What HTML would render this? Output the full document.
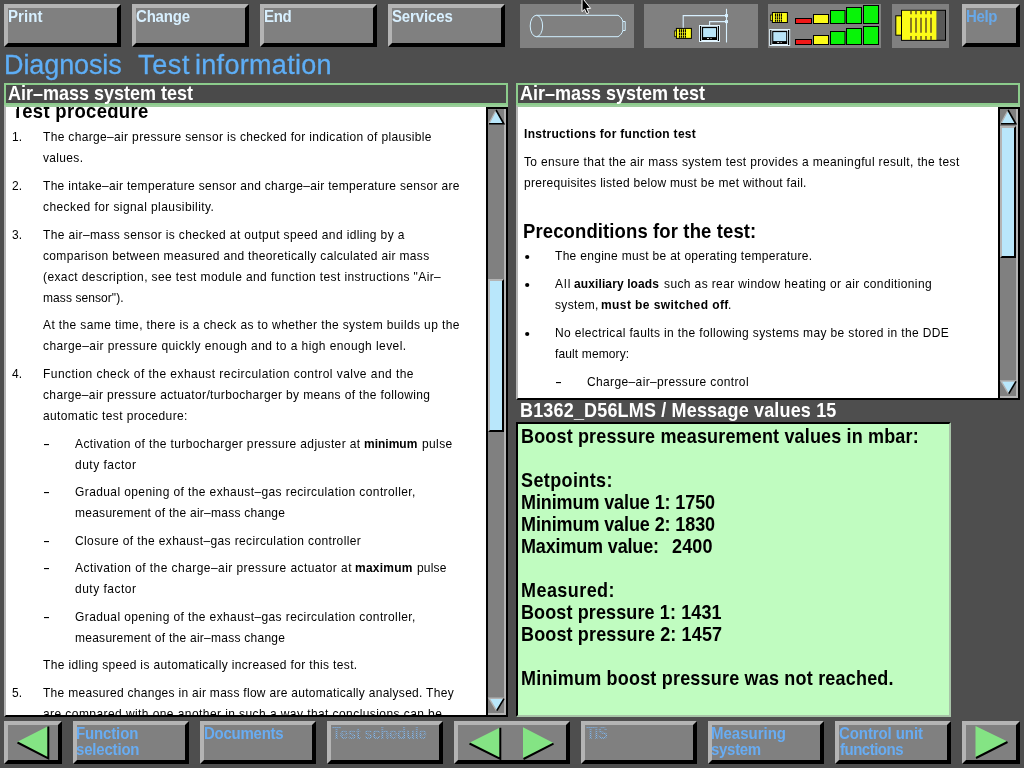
<!DOCTYPE html>
<html><head><meta charset="utf-8"><title>Diagnosis - Test information</title>
<style>
html,body{margin:0;padding:0}
body{width:1024px;height:768px;background:#4e4e4e;position:relative;overflow:hidden;font-family:"Liberation Sans",sans-serif}
.t{position:absolute;white-space:pre;line-height:20px;height:20px;will-change:transform}
.btn{position:absolute;box-sizing:border-box;background:#808080;border:4px solid;border-color:#b4b4b4 #000 #000 #b4b4b4}
.ibox{position:absolute;background:#808080;top:4px;height:44px}
.hdr{position:absolute;box-sizing:border-box;top:83px;height:22px;border:2px solid #8ccc8c;background:#4a4a4a}
.panel{position:absolute;background:#fff;overflow:hidden}
.sb{position:absolute;box-sizing:border-box;background:#808080;border:2px solid #000;width:22px}
.sb i{position:absolute;right:0;top:0;bottom:0;width:2px;background:#b4b4b4}
.sb b{position:absolute;left:0;right:0;bottom:0;height:2px;background:#b4b4b4}
.th{position:absolute;box-sizing:border-box;left:0;width:16px;background:#b9e7fb;border:2px solid;border-color:#b4b4b4 #000 #000 #b4b4b4}
.d{position:absolute;width:5px;height:1px;background:#000;box-shadow:0 0.5px 0 rgba(0,0,0,.25)}
.ttl{-webkit-text-stroke:0.3px #5eaef6}
.dis{color:transparent !important;background:repeating-conic-gradient(#84bcf6 0 25%,#7c8288 0 50%) 0 0/2px 2px;-webkit-background-clip:text;background-clip:text}
svg{position:absolute;left:0;top:0}
</style></head><body>

<!-- top buttons -->
<div class="btn" style="left:4px;top:4px;width:117px;height:43px"></div>
<div class="btn" style="left:132px;top:4px;width:117px;height:43px"></div>
<div class="btn" style="left:260px;top:4px;width:117px;height:43px"></div>
<div class="btn" style="left:388px;top:4px;width:117px;height:43px"></div>
<div class="btn" style="left:962px;top:4px;width:58px;height:43px"></div>
<div class="ibox" style="left:520px;width:114px"></div>
<div class="ibox" style="left:644px;width:114px"></div>
<div class="ibox" style="left:768px;width:113px"></div>
<div class="ibox" style="left:892px;width:57px"></div>

<!-- headers -->
<div class="hdr" style="left:4px;width:504px"></div>
<div class="hdr" style="left:516px;width:504px"></div>

<!-- left panel -->
<div style="position:absolute;left:4px;top:105px;width:504px;height:612px;background:#fff;border-top:2px solid #9ccc9c;border-left:2px solid #b4b4b4;border-bottom:2px solid #000;box-sizing:border-box"></div>
<div class="panel" style="left:6px;top:107px;width:480px;height:608px">
<span class="t" style="left:6.00px;top:-5.00px;font-size:18.5px;letter-spacing:0.308px;font-weight:700;transform:scaleY(1.09);transform-origin:0 16.41px;">Test procedure</span>
<span class="t" style="left:6.00px;top:20.00px;font-size:12px;transform:scaleY(1.1);transform-origin:0 14.16px;">1.</span>
<span class="t" style="left:6.00px;top:69.00px;font-size:12px;transform:scaleY(1.1);transform-origin:0 14.16px;">2.</span>
<span class="t" style="left:6.00px;top:118.00px;font-size:12px;transform:scaleY(1.1);transform-origin:0 14.16px;">3.</span>
<span class="t" style="left:6.00px;top:257.00px;font-size:12px;transform:scaleY(1.1);transform-origin:0 14.16px;">4.</span>
<span class="t" style="left:6.00px;top:576.00px;font-size:12px;transform:scaleY(1.1);transform-origin:0 14.16px;">5.</span>
<span class="t" style="left:37.00px;top:20.00px;font-size:12px;letter-spacing:0.338px;transform:scaleY(1.1);transform-origin:0 14.16px;">The charge–air pressure sensor is checked for indication of plausible</span>
<span class="t" style="left:37.00px;top:41.00px;font-size:12px;letter-spacing:0.333px;transform:scaleY(1.1);transform-origin:0 14.16px;">values.</span>
<span class="t" style="left:37.00px;top:69.00px;font-size:12px;letter-spacing:0.307px;transform:scaleY(1.1);transform-origin:0 14.16px;">The intake–air temperature sensor and charge–air temperature sensor are</span>
<span class="t" style="left:37.00px;top:90.00px;font-size:12px;letter-spacing:0.419px;transform:scaleY(1.1);transform-origin:0 14.16px;">checked for signal plausibility.</span>
<span class="t" style="left:37.00px;top:118.00px;font-size:12px;letter-spacing:0.369px;transform:scaleY(1.1);transform-origin:0 14.16px;">The air–mass sensor is checked at output speed and idling by a</span>
<span class="t" style="left:37.00px;top:139.00px;font-size:12px;letter-spacing:0.344px;transform:scaleY(1.1);transform-origin:0 14.16px;">comparison between measured and theoretically calculated air mass</span>
<span class="t" style="left:37.00px;top:160.00px;font-size:12px;letter-spacing:0.394px;transform:scaleY(1.1);transform-origin:0 14.16px;">(exact description, see test module and function test instructions &quot;Air–</span>
<span class="t" style="left:37.00px;top:181.00px;font-size:12px;letter-spacing:0.077px;transform:scaleY(1.1);transform-origin:0 14.16px;">mass sensor&quot;).</span>
<span class="t" style="left:37.00px;top:208.00px;font-size:12px;letter-spacing:0.382px;transform:scaleY(1.1);transform-origin:0 14.16px;">At the same time, there is a check as to whether the system builds up the</span>
<span class="t" style="left:37.00px;top:229.00px;font-size:12px;letter-spacing:0.418px;transform:scaleY(1.1);transform-origin:0 14.16px;">charge–air pressure quickly enough and to a high enough level.</span>
<span class="t" style="left:37.00px;top:257.00px;font-size:12px;letter-spacing:0.453px;transform:scaleY(1.1);transform-origin:0 14.16px;">Function check of the exhaust recirculation control valve and the</span>
<span class="t" style="left:37.00px;top:278.00px;font-size:12px;letter-spacing:0.356px;transform:scaleY(1.1);transform-origin:0 14.16px;">charge–air pressure actuator/turbocharger by means of the following</span>
<span class="t" style="left:37.00px;top:299.00px;font-size:12px;letter-spacing:0.375px;transform:scaleY(1.1);transform-origin:0 14.16px;">automatic test procedure:</span>
<span class="t" style="left:37.00px;top:548.00px;font-size:12px;letter-spacing:0.351px;transform:scaleY(1.1);transform-origin:0 14.16px;">The idling speed is automatically increased for this test.</span>
<span class="t" style="left:37.00px;top:576.00px;font-size:12px;letter-spacing:0.290px;transform:scaleY(1.1);transform-origin:0 14.16px;">The measured changes in air mass flow are automatically analysed. They</span>
<span class="t" style="left:37.00px;top:597.00px;font-size:12px;letter-spacing:0.424px;transform:scaleY(1.1);transform-origin:0 14.16px;">are compared with one another in such a way that conclusions can be</span>
<span class="t" style="left:69.00px;top:348.00px;font-size:12px;letter-spacing:0.500px;transform:scaleY(1.1);transform-origin:0 14.16px;">duty factor</span>
<span class="t" style="left:69.00px;top:375.00px;font-size:12px;letter-spacing:0.398px;transform:scaleY(1.1);transform-origin:0 14.16px;">Gradual opening of the exhaust–gas recirculation controller,</span>
<span class="t" style="left:69.00px;top:396.00px;font-size:12px;letter-spacing:0.258px;transform:scaleY(1.1);transform-origin:0 14.16px;">measurement of the air–mass change</span>
<span class="t" style="left:69.00px;top:424.00px;font-size:12px;letter-spacing:0.380px;transform:scaleY(1.1);transform-origin:0 14.16px;">Closure of the exhaust–gas recirculation controller</span>
<span class="t" style="left:69.00px;top:472.00px;font-size:12px;letter-spacing:0.500px;transform:scaleY(1.1);transform-origin:0 14.16px;">duty factor</span>
<span class="t" style="left:69.00px;top:500.00px;font-size:12px;letter-spacing:0.398px;transform:scaleY(1.1);transform-origin:0 14.16px;">Gradual opening of the exhaust–gas recirculation controller,</span>
<span class="t" style="left:69.00px;top:521.00px;font-size:12px;letter-spacing:0.258px;transform:scaleY(1.1);transform-origin:0 14.16px;">measurement of the air–mass change</span>
<span class="t" style="left:69.00px;top:327.00px;font-size:12px;letter-spacing:0.380px;transform:scaleY(1.1);transform-origin:0 14.16px;">Activation of the turbocharger pressure adjuster at</span>
<span class="t" style="left:358.00px;top:327.00px;font-size:12px;font-weight:700;transform:scaleY(1.1);transform-origin:0 14.16px;">minimum</span>
<span class="t" style="left:416.00px;top:327.00px;font-size:12px;letter-spacing:0.375px;transform:scaleY(1.1);transform-origin:0 14.16px;">pulse</span>
<span class="t" style="left:69.00px;top:451.00px;font-size:12px;letter-spacing:0.438px;transform:scaleY(1.1);transform-origin:0 14.16px;">Activation of the charge–air pressure actuator at</span>
<span class="t" style="left:349.00px;top:451.00px;font-size:12px;letter-spacing:0.250px;font-weight:700;transform:scaleY(1.1);transform-origin:0 14.16px;">maximum</span>
<span class="t" style="left:411.00px;top:451.00px;font-size:12px;letter-spacing:0.200px;transform:scaleY(1.1);transform-origin:0 14.16px;">pulse</span>
<i class="d" style="left:38px;top:337px"></i>
<i class="d" style="left:38px;top:385px"></i>
<i class="d" style="left:38px;top:434px"></i>
<i class="d" style="left:38px;top:461px"></i>
<i class="d" style="left:38px;top:510px"></i>
<i class="tbar-cover" style="position:absolute;left:5.5px;top:0;width:4.7px;height:1.5px;background:#fff;will-change:transform"></i><i style="position:absolute;left:13.4px;top:0;width:5px;height:1.5px;background:#fff;will-change:transform"></i>
</div>
<div class="sb" style="left:486px;top:107px;height:610px"><i></i><b></b>
<div class="th" style="top:170px;height:153px"></div>
</div>

<!-- right panel -->
<div style="position:absolute;left:516px;top:105px;width:504px;height:295px;background:#fff;border-top:2px solid #9ccc9c;border-left:2px solid #b4b4b4;border-bottom:2px solid #000;box-sizing:border-box"></div>
<div class="panel" style="left:518px;top:107px;width:480px;height:291px">
<span class="t" style="left:6.00px;top:17.00px;font-size:12px;letter-spacing:0.293px;font-weight:700;transform:scaleY(1.1);transform-origin:0 14.16px;">Instructions for function test</span>
<span class="t" style="left:6.00px;top:45.00px;font-size:12px;letter-spacing:0.351px;transform:scaleY(1.1);transform-origin:0 14.16px;">To ensure that the air mass system test provides a meaningful result, the test</span>
<span class="t" style="left:6.00px;top:66.00px;font-size:12px;letter-spacing:0.294px;transform:scaleY(1.1);transform-origin:0 14.16px;">prerequisites listed below must be met without fail.</span>
<span class="t" style="left:5.00px;top:115.00px;font-size:18.5px;letter-spacing:0.115px;font-weight:700;transform:scaleY(1.09);transform-origin:0 16.41px;">Preconditions for the test:</span>
<span class="t" style="left:37.00px;top:139.00px;font-size:12px;letter-spacing:0.302px;transform:scaleY(1.1);transform-origin:0 14.16px;">The engine must be at operating temperature.</span>
<span class="t" style="left:37.00px;top:167.00px;font-size:12px;letter-spacing:1.000px;transform:scaleY(1.1);transform-origin:0 14.16px;">All</span>
<span class="t" style="left:56.00px;top:167.00px;font-size:12px;letter-spacing:0.114px;font-weight:700;transform:scaleY(1.1);transform-origin:0 14.16px;">auxiliary loads</span>
<span class="t" style="left:146.00px;top:167.00px;font-size:12px;letter-spacing:0.380px;transform:scaleY(1.1);transform-origin:0 14.16px;">such as rear window heating or air conditioning</span>
<span class="t" style="left:37.00px;top:188.00px;font-size:12px;letter-spacing:0.333px;transform:scaleY(1.1);transform-origin:0 14.16px;">system,</span>
<span class="t" style="left:83.00px;top:188.00px;font-size:12px;letter-spacing:0.421px;font-weight:700;transform:scaleY(1.1);transform-origin:0 14.16px;">must be switched off</span>
<span class="t" style="left:210.00px;top:188.00px;font-size:12px;transform:scaleY(1.1);transform-origin:0 14.16px;">.</span>
<span class="t" style="left:37.00px;top:216.00px;font-size:12px;letter-spacing:0.362px;transform:scaleY(1.1);transform-origin:0 14.16px;">No electrical faults in the following systems may be stored in the DDE</span>
<span class="t" style="left:37.00px;top:237.00px;font-size:12px;letter-spacing:0.125px;transform:scaleY(1.1);transform-origin:0 14.16px;">fault memory:</span>
<span class="t" style="left:69.00px;top:265.00px;font-size:12px;letter-spacing:0.365px;transform:scaleY(1.1);transform-origin:0 14.16px;">Charge–air–pressure control</span>
<i class="d" style="left:38px;top:275px"></i>
<svg width="480" height="292"><g fill="#000"><circle cx="9.2" cy="150" r="2.1"/><circle cx="9.2" cy="178" r="2.1"/><circle cx="9.2" cy="227" r="2.1"/></g></svg>
</div>
<div class="sb" style="left:998px;top:107px;height:293px"><i></i><b></b>
<div class="th" style="top:17px;height:132px"></div>
</div>

<!-- green box -->
<div style="position:absolute;box-sizing:border-box;left:516px;top:422px;width:435px;height:295px;background:#c0fcc0;border:2px solid;border-color:#000 #a8c4a8 #a8c4a8 #000"></div>

<!-- bottom buttons -->
<div class="btn" style="left:4px;top:721px;width:58px;height:43px"></div>
<div class="btn" style="left:73px;top:721px;width:116px;height:43px"></div>
<div class="btn" style="left:200px;top:721px;width:116px;height:43px"></div>
<div class="btn" style="left:327px;top:721px;width:116px;height:43px"></div>
<div class="btn" style="left:454px;top:721px;width:116px;height:43px"></div>
<div class="btn" style="left:581px;top:721px;width:116px;height:43px"></div>
<div class="btn" style="left:708px;top:721px;width:116px;height:43px"></div>
<div class="btn" style="left:835px;top:721px;width:116px;height:43px"></div>
<div class="btn" style="left:962px;top:721px;width:58px;height:43px"></div>

<span class="t" style="left:8.00px;top:84.00px;font-size:18px;font-weight:700;color:#fff;transform:scaleY(1.12);transform-origin:0 16.24px;">Air–mass system test</span>
<span class="t" style="left:520.00px;top:84.00px;font-size:18px;font-weight:700;color:#fff;transform:scaleY(1.12);transform-origin:0 16.24px;">Air–mass system test</span>
<span class="t ttl" style="left:4.00px;top:55.00px;font-size:27px;letter-spacing:-0.100px;color:#5eaef6;">Diagnosis</span>
<span class="t ttl" style="left:138.00px;top:55.00px;font-size:27px;letter-spacing:0.667px;color:#5eaef6;">Test</span>
<span class="t ttl" style="left:195.00px;top:55.00px;font-size:27px;letter-spacing:0.300px;color:#5eaef6;">information</span>
<span class="t" style="left:520.00px;top:401.00px;font-size:18px;letter-spacing:0.168px;font-weight:700;color:#fff;transform:scaleY(1.12);transform-origin:0 16.24px;">B1362_D56LMS / Message values 15</span>
<span class="t" style="left:521.00px;top:427.00px;font-size:18px;letter-spacing:0.159px;font-weight:700;transform:scaleY(1.12);transform-origin:0 16.24px;">Boost pressure measurement values in mbar:</span>
<span class="t" style="left:521.00px;top:471.00px;font-size:18px;letter-spacing:0.389px;font-weight:700;transform:scaleY(1.12);transform-origin:0 16.24px;">Setpoints:</span>
<span class="t" style="left:521.00px;top:493.00px;font-size:18px;letter-spacing:-0.100px;font-weight:700;transform:scaleY(1.12);transform-origin:0 16.24px;">Minimum value 1: 1750</span>
<span class="t" style="left:521.00px;top:515.00px;font-size:18px;letter-spacing:-0.100px;font-weight:700;transform:scaleY(1.12);transform-origin:0 16.24px;">Minimum value 2: 1830</span>
<span class="t" style="left:521.00px;top:537.00px;font-size:18px;letter-spacing:-0.154px;font-weight:700;transform:scaleY(1.12);transform-origin:0 16.24px;">Maximum value:</span>
<span class="t" style="left:521.00px;top:581.00px;font-size:18px;letter-spacing:0.438px;font-weight:700;transform:scaleY(1.12);transform-origin:0 16.24px;">Measured:</span>
<span class="t" style="left:521.00px;top:603.00px;font-size:18px;letter-spacing:0.119px;font-weight:700;transform:scaleY(1.12);transform-origin:0 16.24px;">Boost pressure 1: 1431</span>
<span class="t" style="left:521.00px;top:625.00px;font-size:18px;letter-spacing:0.143px;font-weight:700;transform:scaleY(1.12);transform-origin:0 16.24px;">Boost pressure 2: 1457</span>
<span class="t" style="left:521.00px;top:669.00px;font-size:18px;letter-spacing:0.197px;font-weight:700;transform:scaleY(1.12);transform-origin:0 16.24px;">Minimum boost pressure was not reached.</span>
<span class="t" style="left:672.00px;top:537.00px;font-size:18px;letter-spacing:0.167px;font-weight:700;transform:scaleY(1.12);transform-origin:0 16.24px;">2400</span>
<span class="t" style="left:8.00px;top:7.00px;font-size:15px;letter-spacing:0.100px;font-weight:700;color:#d8f0ff;transform:scaleY(1.05);transform-origin:0 15.20px;">Print</span>
<span class="t" style="left:136.00px;top:7.00px;font-size:15px;letter-spacing:-0.200px;font-weight:700;color:#d8f0ff;transform:scaleY(1.05);transform-origin:0 15.20px;">Change</span>
<span class="t" style="left:264.00px;top:7.00px;font-size:15px;letter-spacing:-0.350px;font-weight:700;color:#d8f0ff;transform:scaleY(1.05);transform-origin:0 15.20px;">End</span>
<span class="t" style="left:392.00px;top:7.00px;font-size:15px;letter-spacing:-0.143px;font-weight:700;color:#d8f0ff;transform:scaleY(1.05);transform-origin:0 15.20px;">Services</span>
<span class="t" style="left:966.00px;top:7.00px;font-size:15px;letter-spacing:-0.333px;font-weight:700;color:#68a8e8;transform:scaleY(1.05);transform-origin:0 15.20px;">Help</span>
<span class="t" style="left:76.00px;top:724.00px;font-size:15px;letter-spacing:-0.143px;font-weight:700;color:#68acf2;transform:scaleY(1.05);transform-origin:0 15.20px;">Function</span>
<span class="t" style="left:76.00px;top:740.00px;font-size:15px;letter-spacing:-0.188px;font-weight:700;color:#68acf2;transform:scaleY(1.05);transform-origin:0 15.20px;">selection</span>
<span class="t" style="left:204.00px;top:724.00px;font-size:15px;letter-spacing:-0.250px;font-weight:700;color:#68acf2;transform:scaleY(1.05);transform-origin:0 15.20px;">Documents</span>
<span class="t dis" style="left:332.00px;top:724.00px;font-size:15px;letter-spacing:-0.333px;font-weight:700;color:#7fa0c0;transform:scaleY(1.05);transform-origin:0 15.20px;">Test schedule</span>
<span class="t dis" style="left:586.00px;top:724.00px;font-size:15px;letter-spacing:-0.800px;font-weight:700;color:#7fa0c0;transform:scaleY(1.05);transform-origin:0 15.20px;">TIS</span>
<span class="t" style="left:711.00px;top:724.00px;font-size:15px;font-weight:700;color:#68acf2;transform:scaleY(1.05);transform-origin:0 15.20px;">Measuring</span>
<span class="t" style="left:711.00px;top:740.00px;font-size:15px;letter-spacing:-0.300px;font-weight:700;color:#68acf2;transform:scaleY(1.05);transform-origin:0 15.20px;">system</span>
<span class="t" style="left:839.00px;top:724.00px;font-size:15px;letter-spacing:-0.091px;font-weight:700;color:#68acf2;transform:scaleY(1.05);transform-origin:0 15.20px;">Control unit</span>
<span class="t" style="left:840.00px;top:740.00px;font-size:15px;letter-spacing:-0.500px;font-weight:700;color:#68acf2;transform:scaleY(1.05);transform-origin:0 15.20px;">functions</span>

<!-- overlay graphics -->
<svg width="1024" height="768" viewBox="0 0 1024 768">

<!-- tube icon -->
<g fill="none" stroke="#d0efff" stroke-width="1">
 <ellipse cx="536.4" cy="26" rx="6.2" ry="10.7"/>
 <path d="M536.4,15.3 H618 C620.5,16.5 622.3,19 622.8,21.5 V30.5 C622.3,33 620.5,35.5 618,36.7 H536.4"/>
 <path d="M622.8,21.5 H625.2 V30.5 H622.8"/>
</g>
<!-- network icon -->
<g fill="none" stroke="#d8f0ff" stroke-width="1.1">
 <path d="M726.5,8.8 V42.5"/>
 <path d="M683.2,28.5 V15.6 H726.5"/>
 <path d="M709.6,25.5 V21.6 H726.5"/>
</g>
<rect x="725" y="14.1" width="3" height="3" fill="#d8f0ff"/>
<rect x="725" y="20.1" width="3" height="3" fill="#d8f0ff"/>
<g transform="translate(674,27.9)">
  <rect x="0.4" y="3" width="2.6" height="5.4" fill="#fbfb18" stroke="#000" stroke-width="0.7"/>
  <rect x="2.4" y="0.5" width="15" height="10" fill="#fbfb18" stroke="#000" stroke-width="1"/>
  <path d="M5.5,1.4 V9.8 M7.4,1.4 V9.8 M9.4,1.4 V9.8 M11.4,1.4 V9.8" stroke="#000" stroke-width="1.15" stroke-dasharray="3.3 0.5 2 0.5 2.6 10" fill="none"/>
 </g>
<g transform="translate(699,25)">
  <rect x="0" y="0" width="21" height="17" fill="#e2f5ff"/>
  <rect x="1" y="1" width="1.2" height="15" fill="#000"/>
  <rect x="18.8" y="1" width="1.2" height="15" fill="#000"/>
  <rect x="3" y="1.8" width="15" height="13.2" fill="#000"/>
  <rect x="4.1" y="3.1" width="12.9" height="9" fill="#b9e4f8"/>
  <rect x="8" y="13" width="2" height="1" fill="#d0d0d0"/>
  <rect x="11.2" y="13" width="1.6" height="1" fill="#909090"/>
 </g>
<!-- level icon -->
<g transform="translate(770,12)">
  <rect x="0.4" y="3" width="2.6" height="5.4" fill="#fbfb18" stroke="#000" stroke-width="0.7"/>
  <rect x="2.4" y="0.5" width="15" height="10" fill="#fbfb18" stroke="#000" stroke-width="1"/>
  <path d="M5.5,1.4 V9.8 M7.4,1.4 V9.8 M9.4,1.4 V9.8 M11.4,1.4 V9.8" stroke="#000" stroke-width="1.15" stroke-dasharray="3.3 0.5 2 0.5 2.6 10" fill="none"/>
 </g>
<g transform="translate(769.2,29)">
  <rect x="0" y="0" width="21" height="17" fill="#e2f5ff"/>
  <rect x="1" y="1" width="1.2" height="15" fill="#000"/>
  <rect x="18.8" y="1" width="1.2" height="15" fill="#000"/>
  <rect x="3" y="1.8" width="15" height="13.2" fill="#000"/>
  <rect x="4.1" y="3.1" width="12.9" height="9" fill="#b9e4f8"/>
  <rect x="8" y="13" width="2" height="1" fill="#d0d0d0"/>
  <rect x="11.2" y="13" width="1.6" height="1" fill="#909090"/>
 </g>
<g stroke="#000" stroke-width="1">
 <rect x="795.5" y="18.5" width="16" height="5" fill="#f01818"/>
 <rect x="813.5" y="14.5" width="15" height="9" fill="#fbfb18"/>
 <rect x="830.5" y="10.5" width="14.5" height="13" fill="#08f408"/>
 <rect x="846.5" y="7.5" width="15" height="16" fill="#08f408"/>
 <rect x="863.5" y="5.5" width="15" height="18" fill="#08f408"/>
 <rect x="795.5" y="39.5" width="16" height="5" fill="#f01818"/>
 <rect x="813.5" y="35.5" width="15" height="9" fill="#fbfb18"/>
 <rect x="830.5" y="31.5" width="14.5" height="13" fill="#08f408"/>
 <rect x="846.5" y="28.5" width="15" height="16" fill="#08f408"/>
 <rect x="863.5" y="26.5" width="15" height="18" fill="#08f408"/>
</g>
<!-- big connector -->
<rect x="895.8" y="15.8" width="6" height="19.4" fill="#fbfb18" stroke="#000" stroke-width="1"/>
<rect x="901.5" y="10.3" width="44" height="30" fill="#585858" stroke="#000" stroke-width="1"/>
<rect x="902" y="10.8" width="34.4" height="29" fill="#fbfb18"/>
<path d="M911,11 V40 M916,11 V40 M921,11 V40 M926,11 V40 M931,11 V40" stroke="#8a7a20" stroke-width="2" stroke-dasharray="3.2 3.6 15 3.2 4 10" fill="none"/>
<!-- scrollbar arrows: left -->
<g>
 <polygon points="496,110 503.5,123.7 489,123.7" fill="#b9e7fb"/>
 <path d="M489,123.4 L496,110.4" stroke="#b4b4b4" stroke-width="1.2" fill="none"/>
 <path d="M496,110 L503.8,123.8 H489" stroke="#000" stroke-width="1.6" fill="none"/>
 <polygon points="489,698.3 504,698.3 496.5,710.6" fill="#b9e7fb"/>
 <path d="M504,698.3 H489 L496.3,710.3" stroke="#b4b4b4" stroke-width="1.4" fill="none"/>
 <path d="M504,698.6 L496.8,710.6" stroke="#000" stroke-width="1.6" fill="none"/>
</g>
<!-- scrollbar arrows: right -->
<g>
 <polygon points="1008,110 1015.5,123.7 1001,123.7" fill="#b9e7fb"/>
 <path d="M1001,123.4 L1008,110.4" stroke="#b4b4b4" stroke-width="1.2" fill="none"/>
 <path d="M1008,110 L1015.8,123.8 H1001" stroke="#000" stroke-width="1.6" fill="none"/>
 <polygon points="1001,381 1016,381 1008.5,393.6" fill="#b9e7fb"/>
 <path d="M1016,381 H1001 L1008.3,393.3" stroke="#b4b4b4" stroke-width="1.4" fill="none"/>
 <path d="M1016,381.3 L1008.8,393.6" stroke="#000" stroke-width="1.6" fill="none"/>
</g>
<!-- bottom nav arrows -->
<g>
 <polygon points="17,742 48,726.3 48,758.3" fill="#84e484"/>
 <path d="M17.5,742.5 L48.3,758.3 V726.5" stroke="#000" stroke-width="2" fill="none" stroke-linejoin="miter"/>
 <polygon points="469,743 500,727.5 500,758.8" fill="#84e484"/>
 <path d="M469.5,743.5 L500.3,758.8 V727.8" stroke="#000" stroke-width="2" fill="none"/>
 <polygon points="523,727.3 553.5,743 523,758.8" fill="#84e484"/>
 <path d="M523.5,759 L553.5,743.6" stroke="#000" stroke-width="2" fill="none"/>
 <polygon points="975.5,726 1007.5,741.5 975.5,757.8" fill="#84e484"/>
 <path d="M976,758 L1007.5,742" stroke="#000" stroke-width="2" fill="none"/>
</g>
<!-- mouse cursor -->
<path d="M582,-2.5 V11.6 L584.6,9.2 L586.6,13.6 L588.8,12.8 L586.8,8.4 H590.6 Z" fill="#000" stroke="#fff" stroke-width="1" stroke-linejoin="miter"/>

</svg>
</body></html>
